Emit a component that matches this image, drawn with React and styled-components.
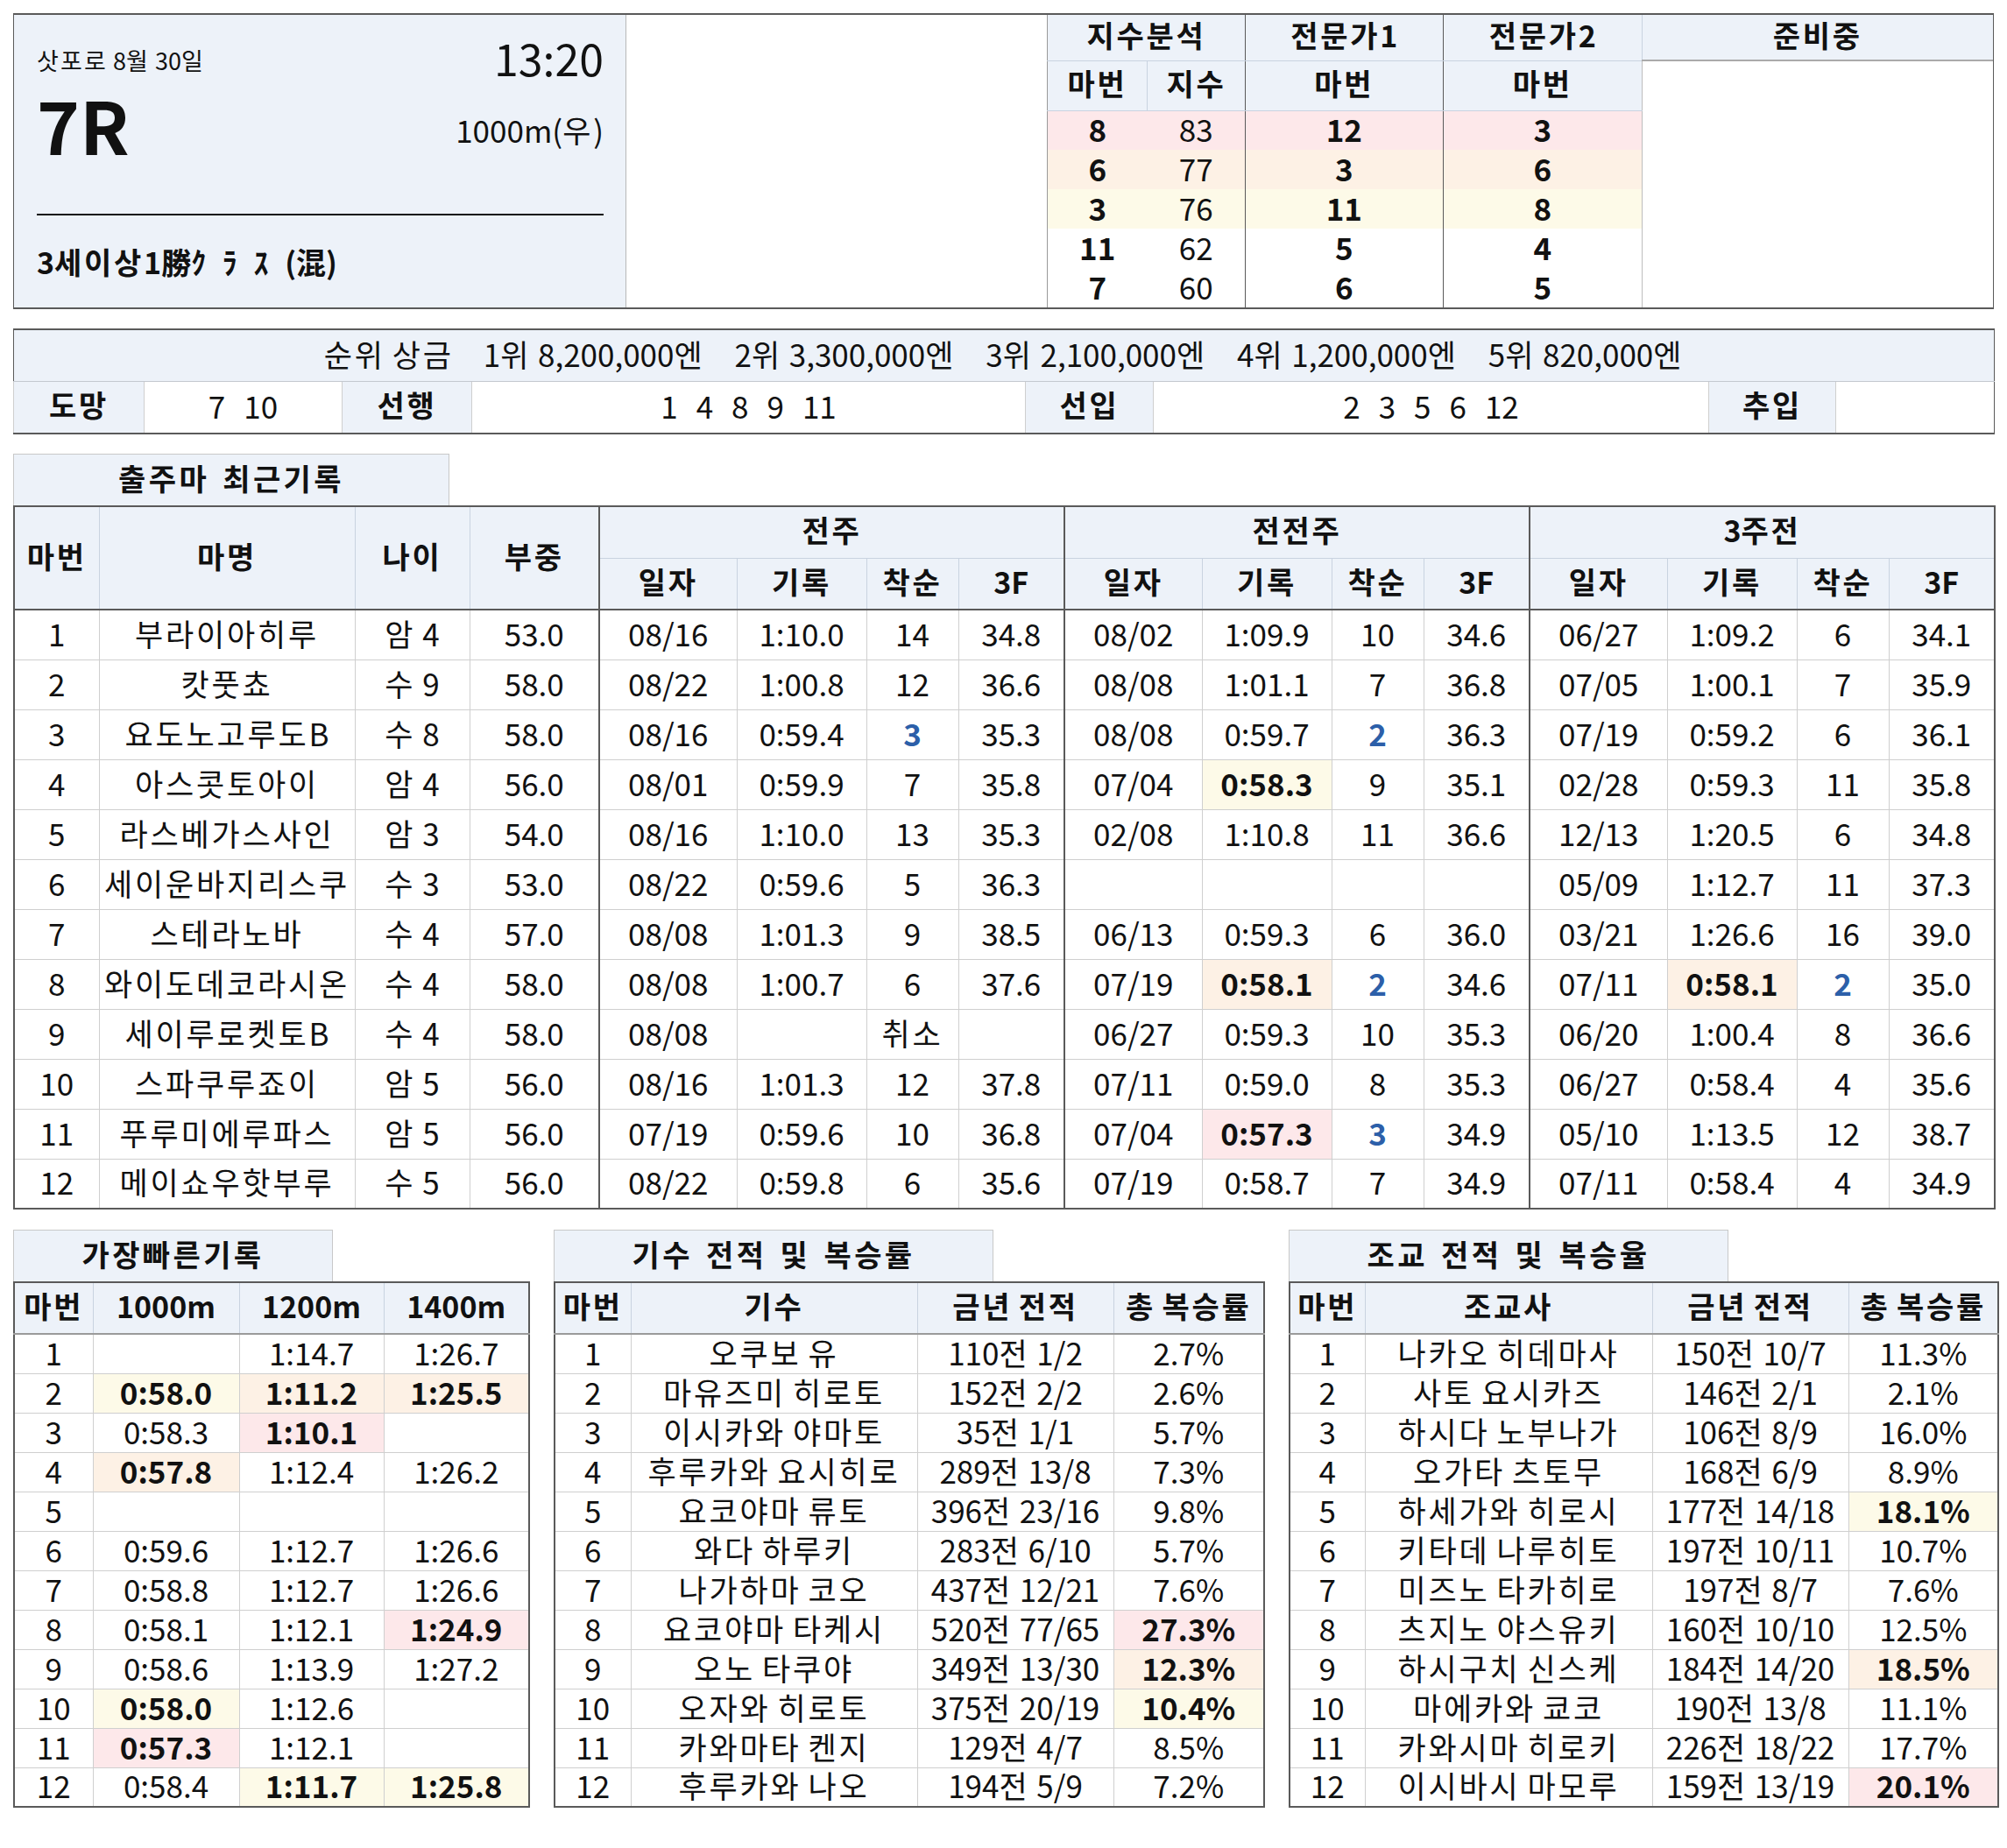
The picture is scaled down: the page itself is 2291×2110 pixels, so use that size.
import React from 'react';
import styled, { createGlobalStyle } from 'styled-components';

const C = {
  dark: '#5a5a5a',
  line: '#cfcfcf',
  head: '#edf2f9',
  headLine: '#c9d3e0',
  pink: '#fde8ea',
  peach: '#fdf1e5',
  yellow: '#fdfae8',
  blue: '#2c5fa9',
  text: '#111',
};
const HL = { 1: C.pink, 2: C.peach, 3: C.yellow };

const GlobalStyle = createGlobalStyle`
  html, body { margin: 0; padding: 0; background: #fff; }
  body { font-family: "Noto Sans CJK KR", "Noto Sans", sans-serif; color: ${C.text}; }
  * { box-sizing: border-box; }
`;

/* Hangul runs are set a little wider, like the original face */
const Hangul = styled.span`
  letter-spacing: 0.08em;
`;
const HANGUL = /([\uAC00-\uD7A3\u3131-\u318E]+)/;
function ko(text) {
  if (!text) return text;
  return text.split(HANGUL).map((part, i) =>
    HANGUL.test(part) ? <Hangul key={i}>{part}</Hangul> : part
  );
}

const Page = styled.div`
  width: 2291px;
  padding: 15px;
  display: flex;
  flex-direction: column;
`;

/* ---------- top box ---------- */
const TopBox = styled.section`
  display: flex;
  height: 338px;
  border-style: solid;
  border-color: ${C.dark};
  border-width: 2px 1px 2px 1px;
  overflow: hidden;
`;
const InfoPanel = styled.div`
  flex: 0 0 698px;
  background: ${C.head};
  padding: 23px 25px 0 26px;
  display: flex;
  flex-direction: column;
`;
const InfoRow = styled.div`
  display: flex;
  justify-content: space-between;
  align-items: flex-start;
  margin-top: ${(p) => p.$mt || 0}px;
`;
const DateText = styled.div`
  font-size: 27px;
  line-height: 1;
  margin-top: 15px;
`;
const TimeText = styled.div`
  font-size: 50px;
  line-height: 1;
`;
const RaceNo = styled.div`
  font-size: 83px;
  font-weight: 700;
  line-height: 1;
`;
const Distance = styled.div`
  font-size: 35px;
  line-height: 1;
  margin-top: 30px;
`;
const Divider = styled.div`
  height: 2px;
  background: #111;
  margin-top: 61px;
`;
const ClassText = styled.div`
  font-size: 34px;
  font-weight: 700;
  line-height: 1;
  margin-top: 36px;
`;
const Kana = styled.span`
  letter-spacing: 0.55em;
`;
const EmptyPanel = styled.div`
  flex: 0 0 481px;
  border-left: 1px solid #b8b8b8;
  background: #fff;
`;
const IndexTable = styled.table`
  flex: 1;
  align-self: flex-start;
  border-collapse: collapse;
  table-layout: fixed;
`;
const ITh = styled.th`
  background: ${C.head};
  font-size: 34px;
  font-weight: 700;
  line-height: 1;
  padding: 0 0 5px;
  text-align: center;
  border-left: 1px solid ${(p) => (p.$dark ? C.dark : p.$edge ? '#9a9a9a' : C.headLine)};
  border-bottom: ${(p) => (p.$thick ? `2px solid #aaaaaa` : `1px solid ${C.headLine}`)};
`;
const ITd = styled.td`
  font-size: 35px;
  font-weight: ${(p) => (p.$bold ? 700 : 400)};
  line-height: 1;
  padding: 0 0 5px;
  text-align: center;
  background: ${(p) => HL[p.$hl] || '#fff'};
  border-left: ${(p) => (p.$dark ? `1px solid ${C.dark}` : p.$edge ? '1px solid #9a9a9a' : 'none')};
`;
const BlankTd = styled.td`
  background: #fff;
  padding: 0;
  border-left: 1px solid #bdbdbd;
`;

/* ---------- prize box ---------- */
const PrizeTable = styled.table`
  margin-top: 22px;
  width: 100%;
  border-collapse: collapse;
  table-layout: fixed;
  border-style: solid;
  border-color: ${C.dark};
  border-width: 2px 1px;
`;
const PrizeHead = styled.td`
  background: ${C.head};
  height: 59px;
  padding: 0 0 5px;
  border-bottom: 1px solid #c3c8cf;
`;
const PrizeLine = styled.div`
  display: flex;
  justify-content: center;
  gap: 34px;
  font-size: 35px;
  line-height: 1;
`;
const PLabel = styled.td`
  background: ${C.head};
  font-size: 34px;
  font-weight: 700;
  line-height: 1;
  text-align: center;
  height: 60px;
  padding: 0 0 5px;
  border-left: 1px solid ${C.line};
`;
const PValue = styled.td`
  background: #fff;
  padding: 0 0 5px;
  border-left: 1px solid ${C.line};
`;
const Nums = styled.div`
  display: flex;
  justify-content: center;
  gap: 21px;
  font-size: 35px;
  line-height: 1;
`;

/* ---------- section tab ---------- */
const Tab = styled.div`
  width: ${(p) => p.$w}px;
  height: 59px;
  margin-top: ${(p) => p.$mt || 0}px;
  padding-bottom: 5px;
  background: ${C.head};
  border: 1px solid #c8c8c8;
  border-bottom: none;
  display: flex;
  align-items: center;
  justify-content: center;
  font-size: 34px;
  font-weight: 700;
  line-height: 1;
  letter-spacing: 0.1em;
  word-spacing: 0.12em;
`;

/* ---------- generic data table ---------- */
const DataTable = styled.table`
  width: 100%;
  border-collapse: collapse;
  table-layout: fixed;
  border: 2px solid ${C.dark};
`;
const Th = styled.th`
  background: ${C.head};
  font-size: 34px;
  font-weight: 700;
  line-height: 1;
  padding: 0 0 5px;
  text-align: center;
  white-space: nowrap;
  border: 1px solid ${C.headLine};
  ${(p) => p.$gl && `border-left: 2px solid ${C.dark};`}
  ${(p) => p.$bb && `border-bottom: 2px solid ${p.$bb};`}
`;
const Td = styled.td`
  font-size: 35px;
  font-weight: ${(p) => (p.$bold ? 700 : 400)};
  color: ${(p) => (p.$blue ? C.blue : C.text)};
  background: ${(p) => HL[p.$hl] || '#fff'};
  padding: 0 0 5px;
  text-align: center;
  white-space: nowrap;
  line-height: 1;
  border: 1px solid ${C.line};
  ${(p) => p.$gl && `border-left: 2px solid ${C.dark};`}
`;
const Tr = styled.tr`
  height: ${(p) => p.$h}px;
`;

const BottomRow = styled.div`
  display: flex;
  gap: 27px;
  margin-top: 23px;
`;
const BottomBlock = styled.div`
  flex: 0 0 ${(p) => p.$w}px;
  display: flex;
  flex-direction: column;
`;

/* ---------- data ---------- */
const indexRows = [
  ['8', '83', '12', '3'],
  ['6', '77', '3', '6'],
  ['3', '76', '11', '8'],
  ['11', '62', '5', '4'],
  ['7', '60', '6', '5'],
];

const horses = [
  { name: '부라이아히루', age: '암 4', wt: '53.0', g: [['08/16', '1:10.0', '14', '34.8'], ['08/02', '1:09.9', '10', '34.6'], ['06/27', '1:09.2', '6', '34.1']] },
  { name: '캇풋쵸', age: '수 9', wt: '58.0', g: [['08/22', '1:00.8', '12', '36.6'], ['08/08', '1:01.1', '7', '36.8'], ['07/05', '1:00.1', '7', '35.9']] },
  { name: '요도노고루도B', age: '수 8', wt: '58.0', g: [['08/16', '0:59.4', '3', '35.3'], ['08/08', '0:59.7', '2', '36.3'], ['07/19', '0:59.2', '6', '36.1']] },
  { name: '아스콧토아이', age: '암 4', wt: '56.0', g: [['08/01', '0:59.9', '7', '35.8'], ['07/04', '0:58.3', '9', '35.1'], ['02/28', '0:59.3', '11', '35.8']] },
  { name: '라스베가스사인', age: '암 3', wt: '54.0', g: [['08/16', '1:10.0', '13', '35.3'], ['02/08', '1:10.8', '11', '36.6'], ['12/13', '1:20.5', '6', '34.8']] },
  { name: '세이운바지리스쿠', age: '수 3', wt: '53.0', g: [['08/22', '0:59.6', '5', '36.3'], ['', '', '', ''], ['05/09', '1:12.7', '11', '37.3']] },
  { name: '스테라노바', age: '수 4', wt: '57.0', g: [['08/08', '1:01.3', '9', '38.5'], ['06/13', '0:59.3', '6', '36.0'], ['03/21', '1:26.6', '16', '39.0']] },
  { name: '와이도데코라시온', age: '수 4', wt: '58.0', g: [['08/08', '1:00.7', '6', '37.6'], ['07/19', '0:58.1', '2', '34.6'], ['07/11', '0:58.1', '2', '35.0']] },
  { name: '세이루로켓토B', age: '수 4', wt: '58.0', g: [['08/08', '', '취소', ''], ['06/27', '0:59.3', '10', '35.3'], ['06/20', '1:00.4', '8', '36.6']] },
  { name: '스파쿠루죠이', age: '암 5', wt: '56.0', g: [['08/16', '1:01.3', '12', '37.8'], ['07/11', '0:59.0', '8', '35.3'], ['06/27', '0:58.4', '4', '35.6']] },
  { name: '푸루미에루파스', age: '암 5', wt: '56.0', g: [['07/19', '0:59.6', '10', '36.8'], ['07/04', '0:57.3', '3', '34.9'], ['05/10', '1:13.5', '12', '38.7']] },
  { name: '메이쇼우핫부루', age: '수 5', wt: '56.0', g: [['08/22', '0:59.8', '6', '35.6'], ['07/19', '0:58.7', '7', '34.9'], ['07/11', '0:58.4', '4', '34.9']] },
];
const timeHl = { '4-1': 3, '8-1': 2, '8-2': 2, '11-1': 1 };
const blueRank = new Set(['3-0', '3-1', '8-1', '8-2', '11-1']);

const fastest = [
  ['', '1:14.7', '1:26.7'],
  ['0:58.0', '1:11.2', '1:25.5'],
  ['0:58.3', '1:10.1', ''],
  ['0:57.8', '1:12.4', '1:26.2'],
  ['', '', ''],
  ['0:59.6', '1:12.7', '1:26.6'],
  ['0:58.8', '1:12.7', '1:26.6'],
  ['0:58.1', '1:12.1', '1:24.9'],
  ['0:58.6', '1:13.9', '1:27.2'],
  ['0:58.0', '1:12.6', ''],
  ['0:57.3', '1:12.1', ''],
  ['0:58.4', '1:11.7', '1:25.8'],
];
const fastHl = { '2-0': 3, '2-1': 2, '2-2': 2, '3-1': 1, '4-0': 2, '8-2': 1, '10-0': 3, '11-0': 1, '12-1': 3, '12-2': 3 };

const jockeys = [
  ['오쿠보 유', '110전 1/2', '2.7%'],
  ['마유즈미 히로토', '152전 2/2', '2.6%'],
  ['이시카와 야마토', '35전 1/1', '5.7%'],
  ['후루카와 요시히로', '289전 13/8', '7.3%'],
  ['요코야마 류토', '396전 23/16', '9.8%'],
  ['와다 하루키', '283전 6/10', '5.7%'],
  ['나가하마 코오', '437전 12/21', '7.6%'],
  ['요코야마 타케시', '520전 77/65', '27.3%'],
  ['오노 타쿠야', '349전 13/30', '12.3%'],
  ['오자와 히로토', '375전 20/19', '10.4%'],
  ['카와마타 켄지', '129전 4/7', '8.5%'],
  ['후루카와 나오', '194전 5/9', '7.2%'],
];
const jockeyHl = { 8: 1, 9: 2, 10: 3 };

const trainers = [
  ['나카오 히데마사', '150전 10/7', '11.3%'],
  ['사토 요시카즈', '146전 2/1', '2.1%'],
  ['하시다 노부나가', '106전 8/9', '16.0%'],
  ['오가타 츠토무', '168전 6/9', '8.9%'],
  ['하세가와 히로시', '177전 14/18', '18.1%'],
  ['키타데 나루히토', '197전 10/11', '10.7%'],
  ['미즈노 타카히로', '197전 8/7', '7.6%'],
  ['츠지노 야스유키', '160전 10/10', '12.5%'],
  ['하시구치 신스케', '184전 14/20', '18.5%'],
  ['마에카와 쿄코', '190전 13/8', '11.1%'],
  ['카와시마 히로키', '226전 18/22', '17.7%'],
  ['이시바시 마모루', '159전 13/19', '20.1%'],
];
const trainerHl = { 12: 1, 9: 2, 5: 3 };

const groupCols = [157, 148, 105, 121];

function Header() {
  return (
    <TopBox>
      <InfoPanel>
        <InfoRow>
          <DateText>{ko('삿포로 8월 30일')}</DateText>
          <TimeText>13:20</TimeText>
        </InfoRow>
        <InfoRow $mt={10}>
          <RaceNo>7R</RaceNo>
          <Distance>{ko('1000m(우)')}</Distance>
        </InfoRow>
        <Divider />
        <ClassText>
          {ko('3세이상1')}勝<Kana>ｸﾗｽ</Kana>(混)
        </ClassText>
      </InfoPanel>
      <EmptyPanel />
      <IndexTable>
        <colgroup>
          <col style={{ width: 114 }} />
          <col style={{ width: 112 }} />
          <col style={{ width: 226 }} />
          <col style={{ width: 227 }} />
          <col style={{ width: 401 }} />
        </colgroup>
        <tbody>
          <Tr $h={52}>
            <ITh colSpan={2} $edge>{ko('지수분석')}</ITh>
            <ITh $dark>{ko('전문가1')}</ITh>
            <ITh $dark>{ko('전문가2')}</ITh>
            <ITh $thick>{ko('준비중')}</ITh>
          </Tr>
          <Tr $h={57}>
            <ITh $edge>{ko('마번')}</ITh>
            <ITh>{ko('지수')}</ITh>
            <ITh $dark>{ko('마번')}</ITh>
            <ITh $dark>{ko('마번')}</ITh>
            <BlankTd rowSpan={6} />
          </Tr>
          {indexRows.map((r, i) => (
            <Tr $h={45} key={i}>
              <ITd $bold $edge $hl={i + 1}>{r[0]}</ITd>
              <ITd $hl={i + 1}>{r[1]}</ITd>
              <ITd $bold $dark $hl={i + 1}>{r[2]}</ITd>
              <ITd $bold $dark $hl={i + 1}>{r[3]}</ITd>
            </Tr>
          ))}
        </tbody>
      </IndexTable>
    </TopBox>
  );
}

function Prize() {
  const widths = [149, 226, 148, 632, 146, 634, 145, 181];
  const prizes = ['순위 상금', '1위 8,200,000엔', '2위 3,300,000엔', '3위 2,100,000엔', '4위 1,200,000엔', '5위 820,000엔'];
  return (
    <PrizeTable>
      <colgroup>
        {widths.map((w, i) => (
          <col key={i} style={{ width: w }} />
        ))}
      </colgroup>
      <tbody>
        <tr>
          <PrizeHead colSpan={8}>
            <PrizeLine>
              {prizes.map((p) => (
                <span key={p}>{ko(p)}</span>
              ))}
            </PrizeLine>
          </PrizeHead>
        </tr>
        <tr>
          <PLabel>{ko('도망')}</PLabel>
          <PValue>
            <Nums><span>7</span><span>10</span></Nums>
          </PValue>
          <PLabel>{ko('선행')}</PLabel>
          <PValue>
            <Nums>{['1', '4', '8', '9', '11'].map((n) => <span key={n}>{n}</span>)}</Nums>
          </PValue>
          <PLabel>{ko('선입')}</PLabel>
          <PValue>
            <Nums>{['2', '3', '5', '6', '12'].map((n) => <span key={n}>{n}</span>)}</Nums>
          </PValue>
          <PLabel>{ko('추입')}</PLabel>
          <PValue />
        </tr>
      </tbody>
    </PrizeTable>
  );
}

function RecentTable() {
  return (
    <>
      <Tab $w={498} $mt={22}>출주마 최근기록</Tab>
      <DataTable>
        <colgroup>
          <col style={{ width: 97 }} />
          <col style={{ width: 292 }} />
          <col style={{ width: 131 }} />
          <col style={{ width: 148 }} />
          {[0, 1, 2].map((g) => groupCols.map((w, i) => <col key={`${g}-${i}`} style={{ width: w }} />))}
        </colgroup>
        <thead>
          <Tr $h={59}>
            <Th rowSpan={2} $bb={C.dark}>{ko('마번')}</Th>
            <Th rowSpan={2} $bb={C.dark}>{ko('마명')}</Th>
            <Th rowSpan={2} $bb={C.dark}>{ko('나이')}</Th>
            <Th rowSpan={2} $bb={C.dark}>{ko('부중')}</Th>
            <Th colSpan={4} $gl>{ko('전주')}</Th>
            <Th colSpan={4} $gl>{ko('전전주')}</Th>
            <Th colSpan={4} $gl>{ko('3주전')}</Th>
          </Tr>
          <Tr $h={59}>
            {[0, 1, 2].map((g) =>
              ['일자', '기록', '착순', '3F'].map((t, i) => (
                <Th key={`${g}-${i}`} $gl={i === 0} $bb={C.dark}>{ko(t)}</Th>
              ))
            )}
          </Tr>
        </thead>
        <tbody>
          {horses.map((h, ri) => {
            const no = ri + 1;
            return (
              <Tr $h={57} key={no}>
                <Td>{no}</Td>
                <Td>{ko(h.name)}</Td>
                <Td>{ko(h.age)}</Td>
                <Td>{h.wt}</Td>
                {h.g.map((v, gi) => {
                  const key = `${no}-${gi}`;
                  const hl = timeHl[key];
                  const blue = blueRank.has(key);
                  return (
                    <React.Fragment key={gi}>
                      <Td $gl>{v[0]}</Td>
                      <Td $hl={hl} $bold={!!hl}>{v[1]}</Td>
                      <Td $blue={blue} $bold={blue}>{ko(v[2])}</Td>
                      <Td>{v[3]}</Td>
                    </React.Fragment>
                  );
                })}
              </Tr>
            );
          })}
        </tbody>
      </DataTable>
    </>
  );
}

function SmallTable({ title, tabW, w, cols, heads, rows, hlOf }) {
  return (
    <BottomBlock $w={w}>
      <Tab $w={tabW}>{title}</Tab>
      <DataTable>
        <colgroup>
          {cols.map((c, i) => (
            <col key={i} style={{ width: c }} />
          ))}
        </colgroup>
        <thead>
          <Tr $h={59}>
            {heads.map((t) => (
              <Th key={t} $bb="#9a9a9a">{ko(t)}</Th>
            ))}
          </Tr>
        </thead>
        <tbody>
          {rows.map((r, ri) => (
            <Tr $h={45} key={ri}>
              <Td>{ri + 1}</Td>
              {r.map((v, ci) => {
                const hl = hlOf(ri + 1, ci);
                return (
                  <Td key={ci} $hl={hl} $bold={!!hl}>{ko(v)}</Td>
                );
              })}
            </Tr>
          ))}
        </tbody>
      </DataTable>
    </BottomBlock>
  );
}

export default function App() {
  return (
    <Page>
      <GlobalStyle />
      <Header />
      <Prize />
      <RecentTable />
      <BottomRow>
        <SmallTable
          title="가장빠른기록"
          tabW={365}
          w={588}
          cols={[90, 167, 165, 166]}
          heads={['마번', '1000m', '1200m', '1400m']}
          rows={fastest}
          hlOf={(r, c) => fastHl[`${r}-${c}`]}
        />
        <SmallTable
          title="기수 전적 및 복승률"
          tabW={502}
          w={810}
          cols={[87, 327, 224, 172]}
          heads={['마번', '기수', '금년 전적', '총 복승률']}
          rows={jockeys}
          hlOf={(r, c) => (c === 2 ? jockeyHl[r] : undefined)}
        />
        <SmallTable
          title="조교 전적 및 복승율"
          tabW={502}
          w={809}
          cols={[86, 328, 224, 171]}
          heads={['마번', '조교사', '금년 전적', '총 복승률']}
          rows={trainers}
          hlOf={(r, c) => (c === 2 ? trainerHl[r] : undefined)}
        />
      </BottomRow>
    </Page>
  );
}
